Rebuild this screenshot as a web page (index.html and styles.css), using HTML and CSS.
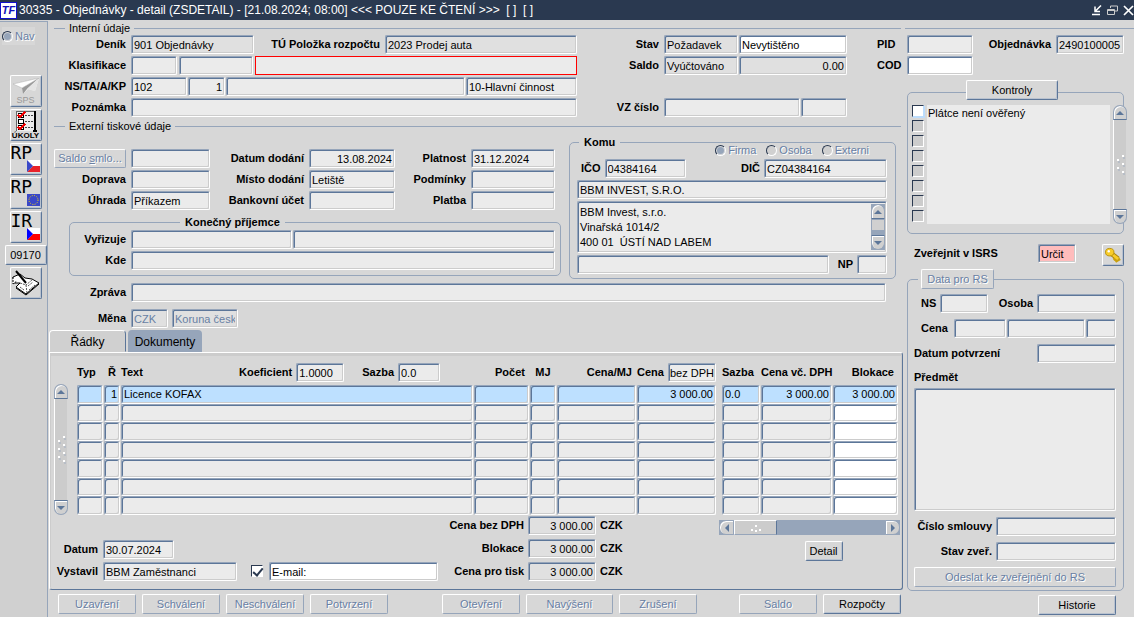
FILE: index.html
```html
<!DOCTYPE html>
<html lang="cs">
<head>
  <meta charset="UTF-8">
  <meta name="viewport" content="width=device-width, initial-scale=1.0">
  <title>Objednávky - detail</title>
  <link rel="stylesheet" href="styles.css">
</head>
<body>
  <header class="titlebar">
    <span class="logo">TF</span>
    <h1>30335 - Objednávky - detail (ZSDETAIL) - [21.08.2024; 08:00] &lt;&lt;&lt; POUZE KE ČTENÍ &gt;&gt;&gt;&nbsp; [ ]&nbsp; [ ]</h1>
    <div class="window-buttons">
      <button aria-label="Minimalizovat"><svg width="11" height="11" viewBox="0 0 11 11"><path d="M10 .5L4.500 6M4 1.500V6.500H9M1 9.500H9" fill="none" stroke="#fff" stroke-width="1.500"/></svg></button>
      <button aria-label="Obnovit"><svg width="11" height="11" viewBox="0 0 11 11"><path d="M3.500 3V1H10.500V6H8M.5 4.500H7.500V9.500H.5ZM.5 5.500H7.500" fill="none" stroke="#ccc"/></svg></button>
      <button aria-label="Zavřít"><svg width="11" height="11" viewBox="0 0 11 11"><path d="M1 1L10 10M10 1L1 10" fill="none" stroke="#fff" stroke-width="1.700"/></svg></button>
    </div>
  </header>

  <div class="app">
    <nav class="sidebar">
      <label class="radio nav-radio"><input type="radio" name="nav" checked disabled>Nav</label>
      <button class="tool" disabled>
        <svg width="26" height="17" viewBox="0 0 26 17"><path d="M0 6L26 0L22 13L15 11L10 16L9 10Z" fill="#f4f4f4"/><path d="M26 0L9 10L10 16L14 11Z" fill="#999"/><path d="M26 0L14 11L22 13Z" fill="#e4e4e4"/><path d="M0 6L26 0L9 10Z" fill="#fff" stroke="#aaa" stroke-width=".5"/></svg>
        <span class="sps">SPS</span>
      </button>
      <button class="tool">
        <svg width="22" height="21" viewBox="0 0 22 21" shape-rendering="crispEdges"><path d="M1 0H20V20H1Z" fill="#eee"/><path d="M1 .5H20M1.500 0V20" stroke="#666" fill="none"/><path d="M20 0V21M18 20H22" stroke="#000" stroke-width="2"/><path d="M3.500 2.500H8.500V6.500H3.500ZM3.500 8.500H8.500V12.500H3.500ZM3.500 14.500H8.500V18.500H3.500Z" fill="#fff" stroke="#000"/><path d="M10 4.500H18M10 10.500H18M10 16.500H18" stroke="#444" stroke-dasharray="2 1"/><path d="M3 4L5 6L10 1M3 16L5 18L10 13" stroke="#e00" stroke-width="1.500" fill="none"/></svg>
        <span class="ukoly">ÚKOLY</span>
      </button>
      <button class="tool"><span class="big">RP</span><svg class="flag" width="13" height="12" viewBox="0 0 13 12"><path d="M0 0H13V6H0Z" fill="#fff"/><path d="M0 12H13V6H6Z" fill="#e8222a"/><path d="M0 0L6 6L0 12Z" fill="#3a48c8"/></svg></button>
      <button class="tool"><span class="big">RP</span><svg class="flag" width="13" height="12" viewBox="0 0 13 12"><path d="M0 0H13V12H0Z" fill="#3a48c8"/><circle cx="6.500" cy="6" r="4.500" fill="none" stroke="#fd0" stroke-dasharray="1 1.360"/></svg></button>
      <button class="tool"><span class="big">IR</span><svg class="flag" width="13" height="12" viewBox="0 0 13 12"><path d="M0 0H13V6H0Z" fill="#fff"/><path d="M0 12H13V6H6Z" fill="#f00"/><path d="M0 0L6 6L0 12Z" fill="#00f"/></svg></button>
      <button class="code">09170</button>
      <button class="tool" aria-label="Poznámky">
        <svg width="28" height="26" viewBox="0 0 28 26"><path d="M1 7L8 4L13 8L20 9L27 13L14 24L4 17L8 13L2 13Z" fill="#fff" stroke="#000"/><path d="M4 18L14 25L27 14" stroke="#000" fill="none"/><path d="M8 13L14 15L20 10M14 15L15 23M8 17L12 20M16 16L21 12M17 20L23 15" stroke="#555" stroke-dasharray="2 1" fill="none"/><path d="M4 1L14 13" stroke="#000" stroke-width="2"/><path d="M1 7V14L5 11" fill="#fff" stroke="#000" stroke-dasharray="2 1"/></svg>
      </button>
    </nav>

    <main class="main">
      <h2 class="section-title">Interní údaje</h2>
      <div class="internal">
        <label for="denik">Deník</label>
        <div class="row">
          <input class="disp w123" id="denik" value="901 Objednávky" readonly>
          <label class="grow" for="polozka">TÚ Položka rozpočtu</label>
          <input class="disp w192" id="polozka" value="2023 Prodej auta" readonly>
        </div>
        <label for="stav">Stav</label>
        <div class="row">
          <input class="disp w74" id="stav" value="Požadavek" readonly>
          <input class="edit grow" value="Nevytištěno" aria-label="Tisk">
        </div>
        <label class="left" for="pid">PID</label>

        <label for="klas">Klasifikace</label>
        <div class="row gap2">
          <input class="w46" id="klas" readonly>
          <input class="w74" aria-label="Klasifikace 2" readonly>
          <input class="grow error" aria-label="Klasifikace název" readonly>
        </div>
        <label for="saldo">Saldo</label>
        <div class="row">
          <input class="disp w74" id="saldo" value="Vyúčtováno" readonly>
          <input class="disp num grow" value="0.00" aria-label="Saldo částka" readonly>
        </div>
        <label class="left" for="cod">COD</label>

        <label for="ns">NS/TA/A/KP</label>
        <div class="row">
          <input class="w56" id="ns" value="102" readonly>
          <input class="w37 num" value="1" aria-label="TA" readonly>
          <input class="grow" aria-label="A" readonly>
          <input class="w111" value="10-Hlavní činnost" aria-label="KP" readonly>
        </div>
        <span></span><span></span><span></span>

        <label for="pozn">Poznámka</label>
        <input id="pozn" readonly>
        <label for="vz">VZ číslo</label>
        <div class="row">
          <input class="grow" id="vz" readonly>
          <input class="w46" aria-label="VZ číslo 2" readonly>
        </div>
      </div>

      <h2 class="section-title">Externí tiskové údaje</h2>
      <div class="external">
        <div>
          <div class="delivery">
            <button class="btn" disabled>Saldo <u>s</u>mlo...</button>
            <input aria-label="Saldo smlouvy" readonly>
            <label for="dodani">Datum dodání</label>
            <input class="num" id="dodani" value="13.08.2024" readonly>
            <label for="platnost">Platnost</label>
            <input id="platnost" value="31.12.2024" readonly>
            <label for="doprava">Doprava</label>
            <input id="doprava" readonly>
            <label for="misto">Místo dodání</label>
            <input id="misto" value="Letiště" readonly>
            <label for="podm">Podmínky</label>
            <input id="podm" readonly>
            <label for="uhrada">Úhrada</label>
            <input id="uhrada" value="Příkazem" readonly>
            <label for="ucet">Bankovní účet</label>
            <input id="ucet" readonly>
            <label for="platba">Platba</label>
            <input id="platba" readonly>
          </div>
          <fieldset class="recipient">
            <legend>Konečný příjemce</legend>
            <div class="recipient-grid">
              <label for="vyr">Vyřizuje</label>
              <div class="row">
                <input class="w161" id="vyr" readonly>
                <input class="grow" aria-label="Vyřizuje jméno" readonly>
              </div>
              <label for="kde">Kde</label>
              <input id="kde" readonly>
            </div>
          </fieldset>
        </div>

        <fieldset class="komu">
          <legend>Komu</legend>
          <div class="komu-type">
            <label class="radio"><input type="radio" name="typ" checked disabled>Firma</label>
            <label class="radio"><input type="radio" name="typ" disabled>Osoba</label>
            <label class="radio"><input type="radio" name="typ" disabled>Externi</label>
          </div>
          <div class="komu-body">
            <div class="row gap4 ids">
              <label for="ico">IČO</label>
              <input class="w81" id="ico" value="04384164" readonly>
              <label class="grow" for="dic">DIČ</label>
              <input class="w123" id="dic" value="CZ04384164" readonly>
            </div>
            <input value="BBM INVEST, S.R.O." aria-label="Název" readonly>
            <div class="address">
              <textarea aria-label="Adresa" readonly>BBM Invest, s.r.o.
Vinařská 1014/2
400 01  ÚSTÍ NAD LABEM</textarea>
              <div class="scroll dark">
                <button class="up" aria-label="Nahoru"></button>
                <span class="thumb"></span>
                <button class="down" aria-label="Dolů"></button>
              </div>
            </div>
            <div class="row gap4">
              <input class="grow" aria-label="Dodatek adresy" readonly>
              <label class="np" for="np">NP</label>
              <input class="w30" id="np" readonly>
            </div>
          </div>
        </fieldset>
      </div>

      <div class="message">
        <label for="zprava">Zpráva</label>
        <input id="zprava" readonly>
        <label for="mena">Měna</label>
        <div class="row gap4">
          <input class="w37 disp" id="mena" value="CZK" disabled>
          <input class="w66 disp" value="Koruna česká" aria-label="Název měny" disabled>
        </div>
      </div>

      <div class="tabs">
        <button class="tab active">Řádky</button>
        <button class="tab">Dokumenty</button>
      </div>
      <section class="panel">
        <div class="lines">
          <div class="scroll lines-scroll">
            <button class="up" aria-label="Nahoru"></button>
            <span class="grip"><svg width="10" height="28" viewBox="0 0 10 28"><path d="M7 1H9M2 5H4M7 9H9M2 13H4M7 17H9M2 21H4M7 25H9" stroke="#fff" stroke-width="2"/><path d="M8 3H10M3 7H5M8 11H10M3 15H5M8 19H10M3 23H5M8 27H10" stroke="#a4b0c2"/></svg></span>
            <button class="down" aria-label="Dolů"></button>
          </div>
          <table>
            <colgroup>
              <col class="w26"><col class="w16"><col><col class="w55"><col class="w26"><col class="w79"><col class="w79"><col class="w4"><col class="w38"><col class="w71"><col class="w65">
            </colgroup>
            <thead>
              <tr>
                <th>Typ</th>
                <th class="c">Ř</th>
                <th>
                  <div class="row gap4 text-head">
                    <span>Text</span>
                    <label class="grow" for="koef">Koeficient</label>
                    <input class="w48" id="koef" value="1.0000" readonly>
                    <label class="sazba" for="sazba">Sazba</label>
                    <input class="w42" id="sazba" value="0.0" readonly>
                  </div>
                </th>
                <th class="r">Počet</th>
                <th class="c">MJ</th>
                <th class="r">Cena/MJ</th>
                <th>
                  <div class="row">
                    <label class="left grow" for="bez">Cena</label>
                    <input class="w48 tight" id="bez" value="bez DPH" readonly>
                  </div>
                </th>
                <th></th>
                <th>Sazba</th>
                <th>Cena vč. DPH</th>
                <th class="r">Blokace</th>
              </tr>
            </thead>
            <tbody>
              <tr class="selected"><td></td><td class="r">1</td><td>Licence KOFAX</td><td></td><td></td><td></td><td class="r">3 000.00</td><td class="gap"></td><td>0.0</td><td class="r">3 000.00</td><td class="r">3 000.00</td></tr>
              <tr><td></td><td></td><td></td><td></td><td></td><td></td><td></td><td class="gap"></td><td></td><td></td><td class="edit"></td></tr>
              <tr><td></td><td></td><td></td><td></td><td></td><td></td><td></td><td class="gap"></td><td></td><td></td><td class="edit"></td></tr>
              <tr><td></td><td></td><td></td><td></td><td></td><td></td><td></td><td class="gap"></td><td></td><td></td><td class="edit"></td></tr>
              <tr><td></td><td></td><td></td><td></td><td></td><td></td><td></td><td class="gap"></td><td></td><td></td><td class="edit"></td></tr>
              <tr><td></td><td></td><td></td><td></td><td></td><td></td><td></td><td class="gap"></td><td></td><td></td><td class="edit"></td></tr>
              <tr><td></td><td></td><td></td><td></td><td></td><td></td><td></td><td class="gap"></td><td></td><td></td><td class="edit"></td></tr>
            </tbody>
          </table>
        </div>

        <div class="summary">
          <div class="issued">
            <label for="datum">Datum</label>
            <input class="w71" id="datum" value="30.07.2024" readonly>
            <label for="vystavil">Vystavil</label>
            <div class="row">
              <input class="w134" id="vystavil" value="BBM Zaměstnanci" readonly>
              <input type="checkbox" class="check mail-check" aria-label="Odeslat e-mailem" checked>
              <input class="edit grow" value="E-mail:" aria-label="E-mail">
            </div>
          </div>
          <div class="totals">
            <label for="t1">Cena bez DPH</label><input class="num disp" id="t1" value="3 000.00" readonly><b>CZK</b>
            <label for="t2">Blokace</label><input class="num disp" id="t2" value="3 000.00" readonly><b>CZK</b>
            <label for="t3">Cena pro tisk</label><input class="num disp" id="t3" value="3 000.00" readonly><b>CZK</b>
          </div>
          <div class="detail">
            <div class="hscroll">
              <button class="prev" aria-label="Vlevo"></button>
              <span class="hthumb"><svg width="12" height="8" viewBox="0 0 12 8"><path d="M1 6H3M5 2H7M5 7H7M9 6H11" stroke="#fff" stroke-width="2"/></svg></span>
              <button class="next" aria-label="Vpravo"></button>
            </div>
            <button class="btn">Detail</button>
          </div>
        </div>
      </section>

      <div class="actions">
        <button class="btn" disabled>Uzavření</button>
        <button class="btn" disabled>Schválení</button>
        <button class="btn" disabled>Neschválení</button>
        <button class="btn" disabled>Potvrzení</button>
        <button class="btn split" disabled>Otevření</button>
        <button class="btn wide" disabled>Navýšení</button>
        <button class="btn" disabled>Zrušení</button>
        <button class="btn last" disabled>Saldo</button>
        <button class="btn">Rozpočty</button>
      </div>
    </main>

    <aside class="side">
      <div class="section-line"></div>
      <div class="ids-grid">
        <input id="pid" readonly>
        <label for="obj">Objednávka</label>
        <input class="disp" id="obj" value="2490100005" readonly>
        <input class="edit" id="cod">
      </div>

      <fieldset class="checks">
        <legend><button class="btn">Kontroly</button></legend>
        <div class="checks-body">
          <div class="check-col">
            <input type="checkbox" class="check current" aria-label="Plátce není ověřený">
            <input type="checkbox" class="check" aria-label="Kontrola 2" disabled>
            <input type="checkbox" class="check" aria-label="Kontrola 3" disabled>
            <input type="checkbox" class="check" aria-label="Kontrola 4" disabled>
            <input type="checkbox" class="check" aria-label="Kontrola 5" disabled>
            <input type="checkbox" class="check" aria-label="Kontrola 6" disabled>
            <input type="checkbox" class="check" aria-label="Kontrola 7" disabled>
            <input type="checkbox" class="check" aria-label="Kontrola 8" disabled>
          </div>
          <div class="check-list">Plátce není ověřený</div>
          <div class="scroll">
            <button class="up" aria-label="Nahoru"></button>
            <span class="grip"><svg width="10" height="20" viewBox="0 0 10 20"><path d="M7 1H9M2 5H4M7 9H9M2 13H4M7 17H9" stroke="#fff" stroke-width="2"/><path d="M8 3H10M3 7H5M8 11H10M3 15H5M8 19H10" stroke="#a4b0c2"/></svg></span>
            <button class="down" aria-label="Dolů"></button>
          </div>
        </div>
      </fieldset>

      <div class="publish">
        <label class="left grow" for="isrs">Zveřejnit v ISRS</label>
        <input class="warn w38" id="isrs" value="Určit" readonly>
        <button class="key" aria-label="Klíč"><svg width="17" height="16" viewBox="0 0 17 16"><path d="M6 6L14 12" stroke="#a8800c" stroke-width="5"/><path d="M9 13L12 11M11 15L16 12" stroke="#c8a010" stroke-width="3"/><path d="M6 6L14 12" stroke="#f8cc28" stroke-width="3"/><ellipse cx="5" cy="5" rx="4.500" ry="4" fill="#f8cc28" stroke="#b8900c"/><circle cx="4" cy="4" r="1.300" fill="#fff"/></svg></button>
      </div>

      <fieldset class="register">
        <legend><button class="btn" disabled>Data pro RS</button></legend>
        <div class="register-body">
          <div class="row gap4 indent">
            <label for="rns">NS</label>
            <input class="w48" id="rns" readonly>
            <label class="grow" for="rosoba">Osoba</label>
            <input class="w79" id="rosoba" readonly>
          </div>
          <div class="row indent">
            <label class="cena" for="rcena">Cena</label>
            <input class="w52" id="rcena" readonly>
            <input class="grow" aria-label="Cena 2" readonly>
            <input class="w30" aria-label="Cena 3" readonly>
          </div>
          <div class="row">
            <label class="left grow" for="rdatum">Datum potvrzení</label>
            <input class="w79" id="rdatum" readonly>
          </div>
          <label class="left subject" for="predmet">Předmět</label>
          <textarea id="predmet" readonly></textarea>
          <div class="row gap4">
            <label class="grow" for="smlouva">Číslo smlouvy</label>
            <input class="w120" id="smlouva" readonly>
          </div>
          <div class="row gap4">
            <label class="grow" for="zver">Stav zveř.</label>
            <input class="w120" id="zver" readonly>
          </div>
          <button class="btn" disabled>Odeslat ke zveřejnění do RS</button>
        </div>
      </fieldset>
      <button class="btn history">Historie</button>
    </aside>
  </div>
</body>
</html>
```
FILE: styles.css
```css
* {
  box-sizing: border-box;
}
body {
  margin: 0;
  background: #d7d7d7;
  color: #000;
  font: 11px/15px "Liberation Sans", Arial, sans-serif;
}
input, button, textarea {
  font: inherit;
  font-weight: normal;
  color: inherit;
  margin: 0;
}
h1, h2 {
  margin: 0;
  font-weight: normal;
}

/* title bar */
.titlebar {
  display: flex;
  align-items: center;
  height: 20px;
  background: #2a3950;
  color: #fff;
}
.titlebar h1 {
  flex: 1;
  font-size: 12px;
  margin-left: 2px;
}
.logo {
  width: 17px;
  height: 17px;
  border: 1px solid #11c;
  background: #fff;
  color: #11b;
  font: italic bold 11px/15px "Liberation Sans", Arial, sans-serif;
  text-align: center;
}
.window-buttons {
  display: flex;
  gap: 5px;
}
.window-buttons button {
  display: flex;
  padding: 0;
  border: 0;
  background: none;
}

/* fields */
input, textarea {
  display: block;
  width: 100%;
  min-width: 0;
  height: 19px;
  padding: 1px 2px 0;
  border: 1px solid;
  border-color: #96a5ba #fff #fff #96a5ba;
  border-radius: 2px;
  outline: none;
  background: #ebebeb;
  box-shadow: inset 1px 1px #5c7699, inset -1px -1px #ccc;
}
textarea {
  resize: none;
  overflow: hidden;
}
.disp {
  background: #e0e0e0;
}
.edit {
  background: #fff;
}
.num {
  text-align: right;
}
.tight {
  padding: 1px 0 0 1px;
}
.error {
  border: 1px solid #f00;
  border-radius: 0;
  box-shadow: none;
}
.warn {
  background: #ffbcbc;
}
input:disabled {
  color: #6880a4;
}
label {
  font-weight: bold;
  line-height: 19px;
  text-align: right;
  white-space: nowrap;
}
.left {
  text-align: left;
}
.row {
  display: flex;
  gap: 1px;
}
.gap2 {
  gap: 2px;
}
.gap4 {
  gap: 4px;
}
.grow {
  flex: 1;
}
.w4 { width: 4px; }
.w16 { width: 16px; }
.w26 { width: 26px; }
.w30 { width: 30px; }
.w37 { width: 37px; }
.w38 { width: 38px; }
.w42 { width: 42px; }
.w46 { width: 46px; }
.w48 { width: 48px; }
.w52 { width: 52px; }
.w55 { width: 55px; }
.w56 { width: 56px; }
.w65 { width: 65px; }
.w66 { width: 66px; }
.w71 { width: 71px; }
.w74 { width: 74px; }
.w79 { width: 79px; }
.w81 { width: 81px; }
.w111 { width: 111px; }
.w120 { width: 120px; }
.w123 { width: 123px; }
.w134 { width: 134px; }
.w161 { width: 161px; }
.w192 { width: 192px; }

.btn, .code, .tool, .key {
  height: 20px;
  padding: 0 2px;
  border: 1px solid;
  border-color: #fff #5c7699 #5c7699 #fff;
  border-radius: 2px;
  background: #d7d7d7;
  box-shadow: inset -1px -1px #b9c2cf;
  white-space: nowrap;
}
.btn:disabled {
  color: #6880a4;
  border-color: #fff #96a5ba #96a5ba #fff;
  box-shadow: none;
  text-shadow: 1px 1px #fff;
}

/* radios and check boxes */
.radio {
  display: flex;
  align-items: center;
  gap: 2px;
  background: #d7d7d7;
  color: #6880a4;
  font-weight: normal;
  line-height: 15px;
  text-shadow: 1px 1px #fff;
}
.radio input {
  appearance: none;
  flex: none;
  width: 11px;
  height: 11px;
  padding: 0;
  border: 1px solid;
  border-color: #2a3950 #fff #fff #2a3950;
  border-radius: 50%;
  background: #d0d0d0;
  box-shadow: none;
}
.radio input:checked {
  background: #96a5ba;
  box-shadow: inset 0 0 0 1px #d7d7d7;
}
.check {
  appearance: none;
  width: 12px;
  height: 12px;
  padding: 0;
  border-color: #2a3950 #fff #fff #2a3950;
  border-radius: 0;
  background: #ccc;
  box-shadow: none;
}
.check:checked {
  background: #fff;
}
.check:checked::after {
  content: "";
  display: block;
  width: 4px;
  height: 8px;
  margin: 0 0 0 3px;
  border: solid #2a3950;
  border-width: 0 2px 2px 0;
  transform: rotate(40deg);
}
.check.current {
  background: #fff;
  border-color: #2a3950 #bcdcfc #bcdcfc #2a3950;
  box-shadow: 1px 1px #bcdcfc;
}

/* scroll bars */
.scroll {
  display: flex;
  flex-direction: column;
  width: 14px;
  background: #ccc;
  border-radius: 7px;
}
.scroll.dark {
  background: #96a5ba;
  border-radius: 0;
}
.scroll button, .hscroll button {
  display: flex;
  align-items: center;
  justify-content: center;
  flex: none;
  padding: 0;
  border: 1px solid #96a5ba;
  background: #d0d0d0;
  box-shadow: inset 1px 1px #fff;
}
.scroll button {
  width: 14px;
  height: 15px;
}
.scroll .up {
  border-bottom-color: #5c7699;
  border-radius: 7px 7px 0 0;
}
.scroll .down {
  margin-top: auto;
  border-top-color: #5c7699;
  border-radius: 0 0 7px 7px;
}
.up::after, .down::after, .prev::after, .next::after {
  content: "";
  border: 4px solid transparent;
}
.up::after {
  border-bottom-color: #5c7699;
  border-top: 0;
}
.down::after {
  border-top-color: #5c7699;
  border-bottom: 0;
}
.prev::after {
  border-right-color: #5c7699;
  border-left: 0;
}
.next::after {
  border-left-color: #5c7699;
  border-right: 0;
}
.thumb {
  height: 12px;
  background: #d0d0d0;
  border: 1px solid #96a5ba;
}
.grip {
  display: flex;
  flex: 1;
  align-items: center;
  justify-content: center;
  border-left: 1px solid #fff;
  border-right: 1px solid #d7d7d7;
}

/* page frame */
.app {
  display: grid;
  grid-template-columns: 48px 1fr 231px;
  min-height: calc(100vh - 20px);
}
.sidebar {
  display: flex;
  flex-direction: column;
  align-items: center;
  gap: 2px;
  margin-top: 1px;
  padding-left: 4px;
  border-top: 1px solid #96a5ba;
  border-right: 1px solid #96a5ba;
  background: #d0d0d0;
}
.nav-radio {
  align-self: flex-start;
  height: 18px;
  margin: 5px 0 28px -2px;
}
.tool {
  position: relative;
  display: flex;
  flex-direction: column;
  align-items: center;
  justify-content: center;
  flex: none;
  width: 32px;
  height: 32px;
  padding: 0;
}
.sps {
  color: #999;
  font-size: 9px;
  line-height: 10px;
}
.ukoly {
  font-size: 8px;
  font-weight: bold;
  line-height: 8px;
}
.big {
  width: 100%;
  height: 100%;
  font-family: "DejaVu Sans Mono", monospace;
  font-size: 18px;
  line-height: 17px;
  text-align: left;
}
.flag {
  position: absolute;
  right: 1px;
  bottom: 2px;
}
.code {
  width: 42px;
}
.main {
  padding-left: 1px;
}

/* internal data */
.section-title {
  display: flex;
  align-items: center;
  gap: 4px;
  margin-left: 5px;
  padding-top: 1px;
  font-size: 11px;
  line-height: 16px;
  height: 15px;
}
.section-title::before, .section-title::after {
  content: "";
  width: 11px;
  height: 1px;
  background: #96a5ba;
}
.section-title::after {
  flex: 1;
  margin-right: 2px;
}
.internal {
  display: grid;
  grid-template-columns: 72px 1fr 77px 183px 51px;
  gap: 2px 5px;
  padding-left: 5px;
  margin-bottom: 1px;
}
.internal .left {
  padding-left: 25px;
}
.internal .row .grow:not(input) {
  margin-right: 4px;
}

/* external data */
.external {
  display: grid;
  grid-template-columns: 1fr 327px;
  gap: 8px;
  padding: 1px 7px 0 5px;
}
.delivery {
  display: grid;
  grid-template-columns: 72px 79fr 89px 86fr 66px 84fr;
  gap: 2px 5px;
  padding: 15px 6px 4px 0;
}
.delivery .btn {
  height: 19px;
}
fieldset {
  min-width: 0;
  margin: 0;
  padding: 0;
  border: 1px solid #96a5ba;
  border-radius: 5px;
}
legend {
  padding: 0 5px;
  font-weight: bold;
  line-height: 16px;
}
.recipient {
  margin-left: 15px;
}
.recipient legend {
  margin-left: 110px;
}
.recipient-grid {
  display: grid;
  grid-template-columns: 56px 1fr;
  gap: 2px 5px;
  padding: 0 5px 5px 0;
}
.komu {
  position: relative;
}
.komu legend {
  margin-left: 9px;
}
.komu-body {
  display: flex;
  flex-direction: column;
  gap: 2px;
  padding: 9px 8px 4px 7px;
}
/* sits on the top edge of the frame */
.komu-type {
  position: absolute;
  top: -7px;
  right: 26px;
  display: flex;
  gap: 10px;
}
.ids {
  padding-left: 4px;
}
.address {
  display: flex;
  height: 52px;
  padding: 2px 1px 2px 0;
  border: 1px solid;
  border-color: #96a5ba #fff #fff #96a5ba;
  border-radius: 2px;
  background: #ebebeb;
  box-shadow: inset 1px 1px #5c7699, inset -1px -1px #ccc;
}
.address textarea {
  flex: 1;
  height: 47px;
  border: 0;
  background: none;
  box-shadow: none;
}
.np {
  padding-left: 5px;
}
.message {
  display: grid;
  grid-template-columns: 72px 1fr;
  gap: 7px 5px;
  padding: 4px 17px 2px 5px;
}

/* tabs with order lines */
.tabs {
  display: flex;
  gap: 2px;
}
.tab {
  width: 74px;
  height: 22px;
  padding: 2px 0 0;
  border: 0;
  border-radius: 4px 4px 0 0;
  background: #96a5ba;
  font-size: 12px;
}
.tab.active {
  width: 77px;
  border: 1px solid;
  border-color: #fff #5c7699 transparent #fff;
  background: #d0d0d0;
}
.panel {
  padding: 5px 1px 8px 4px;
  border: 1px solid;
  border-color: #fff #5c7699 #5c7699 #fff;
  border-radius: 0 3px 3px 3px;
  box-shadow: inset 1px 3px #ccc, inset -1px 0 #ccc;
}
.lines {
  display: flex;
  gap: 8px;
  padding-right: 2px;
}
.lines-scroll {
  margin-top: 26px;
  height: 131px;
}
table {
  flex: 1;
  table-layout: fixed;
  width: 100%;
  border-spacing: 1px 0;
}
thead tr {
  height: 27px;
}
th {
  padding: 0 0 3px;
  line-height: 19px;
  text-align: left;
  vertical-align: bottom;
  white-space: nowrap;
}
th.r {
  padding-right: 4px;
}
th.c {
  text-align: center;
}
th.r, td.r {
  text-align: right;
}
.text-head {
  padding-right: 33px;
}
.sazba {
  padding-left: 14px;
}
tbody tr {
  height: 19px;
}
tbody tr + tr {
  height: 18px;
}
tbody tr:nth-child(2n+3) {
  height: 19px;
}
td {
  padding: 0 2px;
  border: 1px solid;
  border-color: #96a5ba #fff #fff #96a5ba;
  border-radius: 2px;
  background: #ebebeb;
  box-shadow: inset 1px 1px #5c7699, inset -1px -1px #ccc;
}
td.edit {
  background: #fff;
}
.selected td {
  background: #bde0ff;
}
td.gap, .selected td.gap {
  border: 0;
  background: none;
  box-shadow: none;
  padding: 0;
}

.summary {
  display: grid;
  grid-template-columns: 1fr 281px 181px;
  padding: 1px 1px 0 0;
}
.issued {
  display: grid;
  grid-template-columns: 44px 1fr;
  gap: 3px 5px;
  align-self: end;
}
.mail-check {
  margin: 3px 5px 0 13px;
}
.totals {
  display: grid;
  grid-template-columns: 86px 68px 1fr;
  gap: 4px;
}
.totals b {
  line-height: 19px;
}
.detail {
  display: flex;
  flex-direction: column;
  align-items: center;
  gap: 6px;
}
.detail .btn {
  width: 38px;
  margin-left: 28px;
}
.hscroll {
  display: flex;
  width: 100%;
  height: 15px;
  margin-top: 4px;
  background: #96a5ba;
}
.hscroll button {
  width: 15px;
}
.hscroll .prev {
  border-radius: 7px 0 0 7px;
}
.hscroll .next {
  margin-left: auto;
  border-radius: 0 7px 7px 0;
}
.hthumb {
  display: flex;
  align-items: center;
  justify-content: center;
  width: 43px;
  border: 1px solid;
  border-color: #fff #5c7699 #96a5ba #fff;
  background: #ccc;
}

.actions {
  display: flex;
  gap: 6px;
  padding: 4px 2px 2px 9px;
}
.actions .btn {
  width: 78px;
}
.actions .wide {
  width: 87px;
}
.actions .split {
  margin-left: 48px;
}
.actions .last {
  margin-left: auto;
}

/* right column */
.side {
  display: flex;
  flex-direction: column;
  padding: 0 10px 2px 4px;
}
.section-line {
  height: 1px;
  margin: 8px -10px 6px -2px;
  background: #96a5ba;
}
.ids-grid {
  display: grid;
  grid-template-columns: 66px 1fr 68px;
  gap: 2px 5px;
}
.checks {
  margin-top: 5px;
  padding-bottom: 9px;
}
.checks legend {
  margin: 0 0 0 58px;
  padding: 0 0 5px;
}
.checks .btn {
  display: block;
  width: 92px;
}
.checks-body {
  display: flex;
  gap: 3px;
  margin: 0 -4px 0 4px;
}
.check-col {
  display: flex;
  flex-direction: column;
  gap: 3px;
  padding-bottom: 2px;
}
.check-list {
  flex: 1;
  padding: 1px;
  background: #ebebeb;
}
.checks .scroll {
  position: relative;
}
.publish {
  display: flex;
  align-items: flex-start;
  margin-top: 10px;
  padding-left: 7px;
}
.key {
  display: flex;
  align-items: center;
  justify-content: center;
  width: 22px;
  height: 22px;
  margin-left: 26px;
}
.register {
  flex: 1;
  margin-top: 3px;
}
.register legend {
  margin-left: 10px;
  padding: 0 0 0 3px;
}
.register legend .btn {
  display: block;
  width: 73px;
}
.register-body {
  display: flex;
  flex-direction: column;
  gap: 6px;
  padding: 5px 7px 3px 6px;
}
.indent {
  padding-left: 7px;
}
.cena {
  padding-right: 5px;
}
.subject {
  height: 16px;
  margin-bottom: -3px;
  line-height: 16px;
}
.register textarea {
  height: 123px;
}
.history {
  width: 78px;
  margin: 4px 8px 0 auto;
}
```
